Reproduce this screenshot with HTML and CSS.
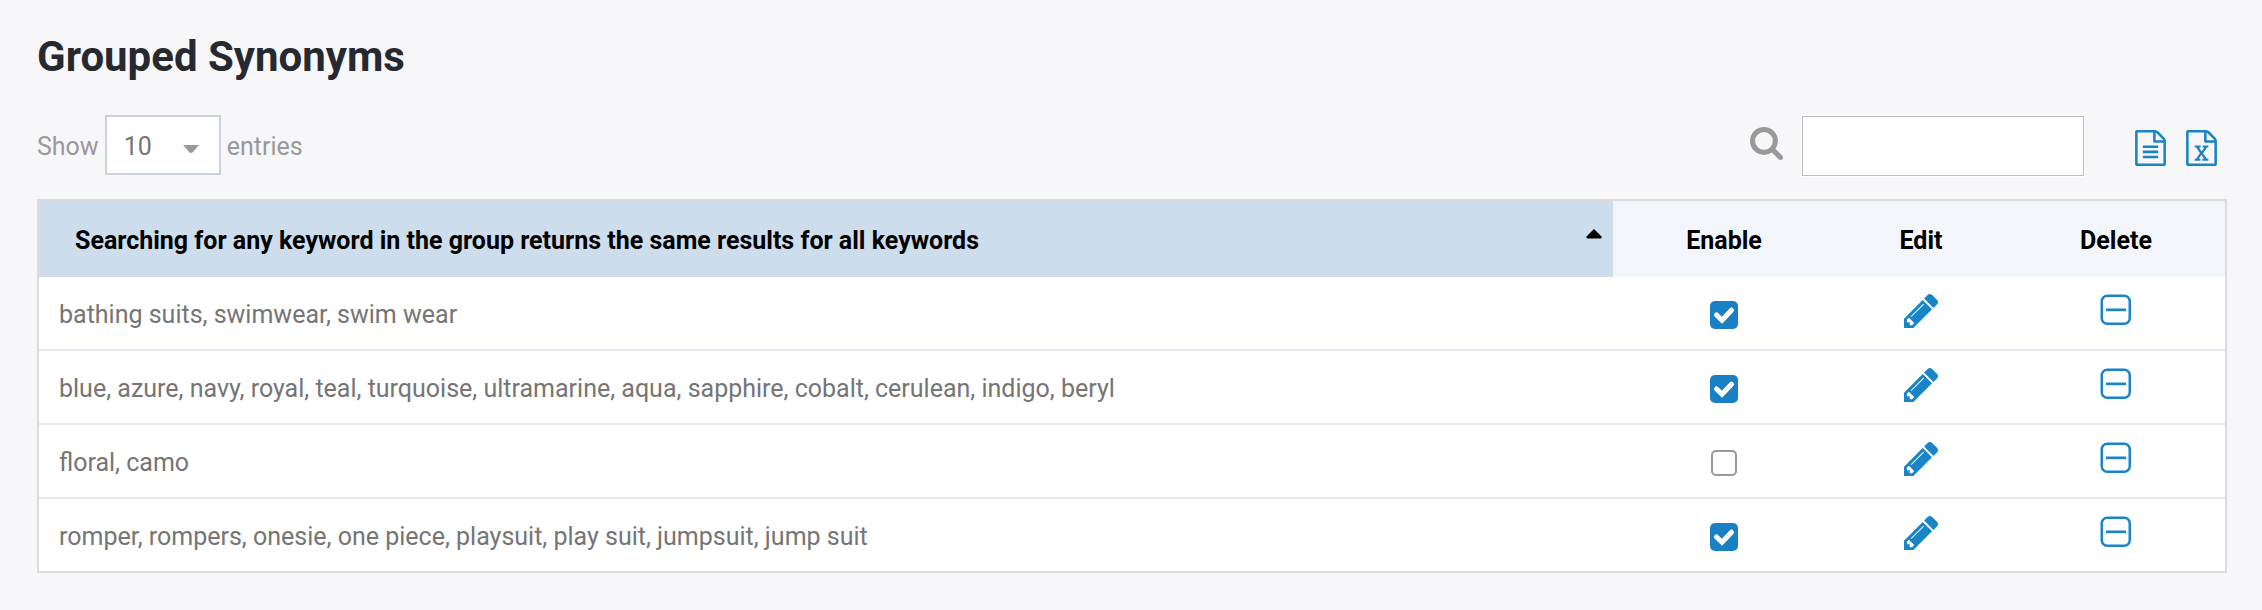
FILE: index.html
```html
<!DOCTYPE html>
<html lang="en">
<head>
<meta charset="utf-8">
<title>Grouped Synonyms</title>
<link rel="stylesheet" href="styles.css">
</head>
<body>
<svg class="sprite" aria-hidden="true">
  <symbol id="pencil" viewBox="0 149 1515 1515"><path d="M363 1536l91-91-235-235-91 91v107h128v128h107zm523-928q0-22-22-22-10 0-17 7l-542 542q-7 7-7 17 0 22 22 22 10 0 17-7l542-542q7-7 7-17zm-54-192l416 416-832 832H0v-416zm683 96q0 53-37 90l-166 166-416-416 166-165q36-38 90-38 53 0 91 38l235 234q37 39 37 91z"/></symbol>
  <symbol id="minus-box" viewBox="0 0 32 32"><rect x="1.75" y="1.75" width="28" height="28" rx="5.5" fill="none" stroke="currentColor" stroke-width="2.5"/><path d="M6 14.5h20v2.7H6z"/></symbol>
</svg>
<main class="page">
  <h1 class="title">Grouped Synonyms</h1>
  <div class="toolbar">
    <label class="length">Show
      <select class="length-select"><option>10</option><option>25</option><option>50</option></select>
      entries</label>
    <div class="tools">
      <label class="search-label" for="search" aria-label="Search">
        <svg class="search-icon" viewBox="0 0 1664 1664"><path d="M1152 704q0-185-131.5-316.5T704 256 387.500 387.500 256 704t131.500 316.500T704 1152t316.500-131.500T1152 704zm512 832q0 52-38 90t-90 38q-54 0-90-38l-343-342q-179 124-399 124-143 0-273.500-55.500t-225-150-150-225T0 704t55.500-273.500 150-225 225-150T704 0t273.500 55.500 225 150 150 225T1408 704q0 220-124 399l343 343q37 37 37 90z"/></svg>
      </label>
      <input class="search" id="search" type="text">
      <div class="exports">
        <button class="icon-button" type="button" aria-label="Export text">
          <svg class="file-icon" viewBox="0 0 1536 1792"><path d="M1468 380q28 28 48 76t20 88v1152q0 40-28 68t-68 28H96q-40 0-68-28t-28-68V96q0-40 28-68T96 0h896q40 0 88 20t76 48zm-444-244v376h376q-10-29-22-41L1065 158q-12-12-41-22zm384 1528V640H992q-40 0-68-28t-28-68V128H128v1536h1280zM384 800q0-14 9-23t23-9h704q14 0 23 9t9 23v64q0 14-9 23t-23 9H416q-14 0-23-9t-9-23v-64zm736 224q14 0 23 9t9 23v64q0 14-9 23t-23 9H416q-14 0-23-9t-9-23v-64q0-14 9-23t23-9h704zm0 256q14 0 23 9t9 23v64q0 14-9 23t-23 9H416q-14 0-23-9t-9-23v-64q0-14 9-23t23-9h704z"/></svg>
        </button>
        <button class="icon-button" type="button" aria-label="Export spreadsheet">
          <svg class="file-icon" viewBox="0 0 1536 1792"><path d="M1468 380q28 28 48 76t20 88v1152q0 40-28 68t-68 28H96q-40 0-68-28t-28-68V96q0-40 28-68T96 0h896q40 0 88 20t76 48zm-444-244v376h376q-10-29-22-41L1065 158q-12-12-41-22zm384 1528V640H992q-40 0-68-28t-28-68V128H128v1536h1280zM429 1425v107h281v-107h-75l103-161q5-7 10-16.500t7.500-13.500 3.500-4h2q1 4 5 10 2 4 4.500 7.500t6 8 6.500 8.500l107 161h-76v107h291v-107h-68l-192-273 195-282h67V768H828v107h74l-103 159q-4 7-10 16.500t-9 13.500l-2 3h-2q-1-4-5-10-6-11-17-23L648 875h76V768H432v107h68l189 272-194 278h-66z"/></svg>
        </button>
      </div>
    </div>
  </div>
  <table class="grid">
    <thead>
      <tr>
        <th class="col-words" scope="col" aria-sort="ascending"><div class="sort-head">Searching for any keyword in the group returns the same results for all keywords
          <svg class="sort-icon" viewBox="0 0 16 10"><path d="M8 0 15.500 7.500Q16 9.500 14.500 9.500H1.500Q0 9.500.5 7.500z"/></svg></div></th>
        <th class="col-enable" scope="col">Enable</th>
        <th class="col-edit" scope="col">Edit</th>
        <th class="col-delete" scope="col">Delete</th>
      </tr>
    </thead>
    <tbody>
      <tr>
        <td>bathing suits, swimwear, swim wear</td>
        <td><input class="check" type="checkbox" aria-label="Enable" checked></td>
        <td><button class="icon-button edit" type="button" aria-label="Edit"><svg class="edit-icon"><use href="#pencil"/></svg></button></td>
        <td><button class="icon-button delete" type="button" aria-label="Delete"><svg class="delete-icon"><use href="#minus-box"/></svg></button></td>
      </tr>
      <tr>
        <td>blue, azure, navy, royal, teal, turquoise, ultramarine, aqua, sapphire, cobalt, cerulean, indigo, beryl</td>
        <td><input class="check" type="checkbox" aria-label="Enable" checked></td>
        <td><button class="icon-button edit" type="button" aria-label="Edit"><svg class="edit-icon"><use href="#pencil"/></svg></button></td>
        <td><button class="icon-button delete" type="button" aria-label="Delete"><svg class="delete-icon"><use href="#minus-box"/></svg></button></td>
      </tr>
      <tr>
        <td>floral, camo</td>
        <td><input class="check" type="checkbox" aria-label="Enable"></td>
        <td><button class="icon-button edit" type="button" aria-label="Edit"><svg class="edit-icon"><use href="#pencil"/></svg></button></td>
        <td><button class="icon-button delete" type="button" aria-label="Delete"><svg class="delete-icon"><use href="#minus-box"/></svg></button></td>
      </tr>
      <tr>
        <td>romper, rompers, onesie, one piece, playsuit, play suit, jumpsuit, jump suit</td>
        <td><input class="check" type="checkbox" aria-label="Enable" checked></td>
        <td><button class="icon-button edit" type="button" aria-label="Edit"><svg class="edit-icon"><use href="#pencil"/></svg></button></td>
        <td><button class="icon-button delete" type="button" aria-label="Delete"><svg class="delete-icon"><use href="#minus-box"/></svg></button></td>
      </tr>
    </tbody>
  </table>
</main>
</body>
</html>
```
FILE: styles.css
```css
* { box-sizing: border-box; }

body {
  margin: 0;
  background: #f7f7fa;
  color: #757575;
  font: 25px/32px Roboto, "Liberation Sans", sans-serif;
}

svg { display: block; fill: currentColor; }
.sprite { display: none; }

.page { padding: 32px 35px 37px 37px; }

.title {
  margin: 0 0 33px;
  color: #272930;
  font-size: 42px;
  line-height: 50px;
  font-weight: 700;
}

.toolbar {
  display: flex;
  justify-content: space-between;
  align-items: flex-start;
  margin-bottom: 22px;
}

.length {
  display: flex;
  align-items: baseline;
  gap: 6px;
  color: #999;
}

.length-select {
  appearance: none;
  width: 116px;
  height: 60px;
  padding: 3px 17px 0;
  border: 2px solid #cbd1de;
  border-radius: 0;
  background: #fff url("data:image/svg+xml,%3Csvg xmlns='http://www.w3.org/2000/svg' width='16' height='8'%3E%3Cpath d='M0 0h16L10 7Q8 9 6 7z' fill='%23999'/%3E%3C/svg%3E") no-repeat right 20px top 28px;
  color: #757575;
  font: inherit;
}

.tools { display: flex; align-items: center; }

.search-label { padding-bottom: 6px; color: #999; }
.search-icon { width: 33px; height: 33px; }

.search {
  width: 282px;
  height: 60px;
  margin: 1px 51px 1px 19px;
  padding: 0 16px;
  border: 1px solid #bbb;
  box-shadow: 0 0 0 1px #fff;
  background: #fff;
  color: inherit;
  font: inherit;
}

.exports { display: flex; gap: 20px; padding: 4px 10px 0 0; }

.icon-button {
  display: block;
  padding: 0;
  border: 0;
  background: none;
  color: #1b84c7;
  cursor: pointer;
}

.file-icon { width: 31px; height: 36px; }

.grid {
  width: 100%;
  border: 2px solid #d9dde2;
  border-spacing: 0;
  background: #fff;
}

th {
  height: 76px;
  padding: 4px 0 0;
  background: #f2f5fa;
  color: #000;
  font-weight: 700;
}

.col-words { padding: 4px 11px 0 36px; background: #cdddeb; text-align: left; }
.col-enable { width: 222px; }
.col-edit { width: 172px; }
.col-delete { width: 218px; }

.sort-head { display: flex; justify-content: space-between; }
.sort-icon { width: 16px; height: 10px; margin-top: 4px; }

td {
  height: 74px;
  padding: 0;
  border-bottom: 2px solid #e7eaf0;
}

td:first-child { padding: 4px 20px 0; }
tr:last-child td { height: 72px; border-bottom: 0; }

.check {
  appearance: none;
  display: block;
  width: 26px;
  height: 26px;
  margin: 4px auto 0;
  border: 2px solid #999;
  border-radius: 5px;
  background: #fff;
}

.check:checked {
  width: 28px;
  height: 28px;
  border: 0;
  background: #1a80c4 url("data:image/svg+xml,%3Csvg xmlns='http://www.w3.org/2000/svg' viewBox='0 0 28 28'%3E%3Cpath d='M6.500 14 12 19.200 21.500 9.200' fill='none' stroke='%23fff' stroke-width='5' stroke-linecap='round'/%3E%3C/svg%3E") center / 28px;
}

.edit, .delete { margin: 0 auto; }
.edit { padding-bottom: 4px; }
.delete { padding-bottom: 6px; }
.edit-icon { width: 34px; height: 34px; }
.delete-icon { width: 32px; height: 32px; }
```
